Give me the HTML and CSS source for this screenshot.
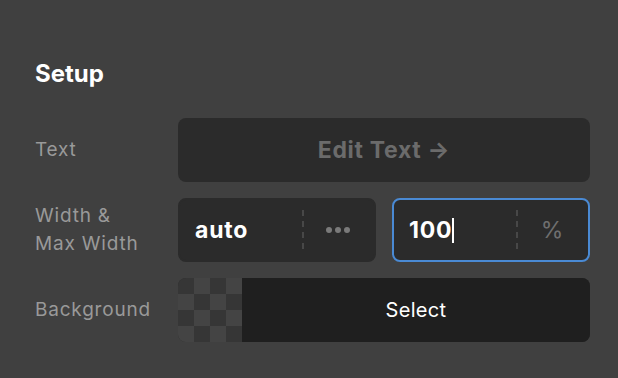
FILE: index.html
```html
<!DOCTYPE html>
<html>
<head>
<meta charset="utf-8">
<link rel="stylesheet" href="styles.css">
</head>
<body>
<div class="panel">
  <h2 class="title">Setup</h2>
  <div class="rows">
    <div class="label">Text</div>
    <div class="box edit-btn">Edit Text →</div>

    <div class="label">Width &amp;<br>Max Width</div>
    <div class="pair">
      <div class="box field">
        <span class="value">auto</span>
        <span class="suffix"><span class="dashes"></span><span class="dots"><i></i><i></i><i></i></span></span>
      </div>
      <div class="box field focused">
        <span class="value">100<span class="caret"></span></span>
        <span class="suffix"><span class="dashes"></span><span class="unit">%</span></span>
      </div>
    </div>

    <div class="label">Background</div>
    <div class="box bg-picker">
      <div class="checker"></div>
      <div class="select">Select</div>
    </div>
  </div>
</div>
</body>
</html>
```
FILE: styles.css
```css
html, body {
  margin: 0;
  padding: 0;
  background: #404040;
}
body {
  font-family: Inter, "Noto Sans", sans-serif;
  width: 618px;
  height: 378px;
  overflow: hidden;
}
.panel {
  padding: 58px 28px 0 35px;
}
.title {
  margin: 0 0 28px 0;
  font-size: 24px;
  line-height: 32px;
  font-weight: 700;
  color: #ffffff;
}
.rows {
  display: grid;
  grid-template-columns: 143px 1fr;
  grid-auto-rows: 64px;
  row-gap: 16px;
}
.label {
  display: flex;
  align-items: center;
  font-size: 19px;
  line-height: 28px;
  color: #999999;
  letter-spacing: 0.8px;
}
.box {
  background: #2b2b2b;
  border-radius: 8px;
  box-sizing: border-box;
}
.edit-btn {
  display: flex;
  align-items: center;
  justify-content: center;
  font-size: 23px;
  font-weight: 700;
  color: #6b6b6b;
  letter-spacing: 0.7px;
}
.pair {
  display: grid;
  grid-template-columns: 1fr 1fr;
  column-gap: 16px;
}
.field {
  display: flex;
  align-items: stretch;
  border: 2px solid #2b2b2b;
}
.field.focused {
  border-color: #4a8ad4;
}
.value {
  flex: 1;
  display: flex;
  align-items: center;
  padding-left: 15px;
  font-size: 23px;
  font-weight: 700;
  color: #ffffff;
  letter-spacing: 0.8px;
}
.caret {
  display: inline-block;
  width: 2px;
  height: 25px;
  background: #ffffff;
  margin-left: 0;
}
.suffix {
  position: relative;
  width: 72px;
  display: flex;
  align-items: center;
  justify-content: center;
}
.dashes {
  position: absolute;
  left: 0;
  top: 10px;
  bottom: 10px;
  width: 2px;
  background: repeating-linear-gradient(to bottom, #484848 0 6px, transparent 6px 11px);
}
.dots {
  display: flex;
  gap: 3px;
}
.dots i {
  width: 6px;
  height: 6px;
  border-radius: 50%;
  background: #7a7a7a;
}
.unit {
  font-size: 23px;
  color: #6f6f6f;
}
.bg-picker {
  display: flex;
  overflow: hidden;
}
.checker {
  width: 64px;
  background-color: #363636;
  background-image:
    linear-gradient(45deg, #444444 25%, transparent 25%, transparent 75%, #444444 75%),
    linear-gradient(45deg, #444444 25%, transparent 25%, transparent 75%, #444444 75%);
  background-size: 32px 32px;
  background-position: 0 0, 16px 16px;
}
.select {
  flex: 1;
  background: #1f1f1f;
  display: flex;
  align-items: center;
  justify-content: center;
  font-size: 20px;
  color: #ffffff;
  letter-spacing: 0.3px;
}
```
